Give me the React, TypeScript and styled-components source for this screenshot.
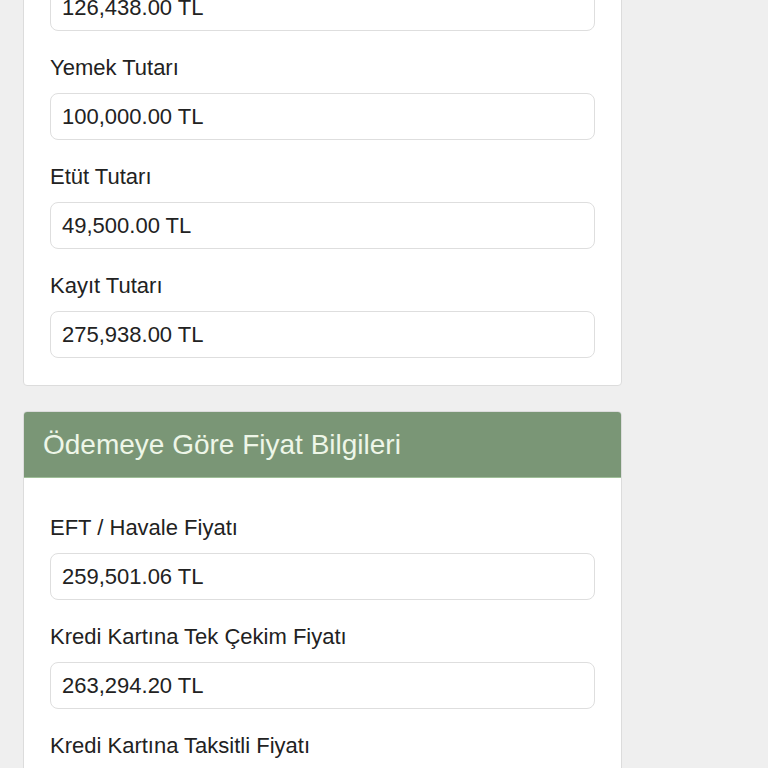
import * as React from 'react'
import styled, {createGlobalStyle} from 'styled-components'

const GlobalStyle = createGlobalStyle`
  html, body {
    margin: 0;
    padding: 0;
    background: #efefef;
  }
  body {
    font-family: "Liberation Sans", Arial, "Noto Sans", sans-serif;
    color: #222;
  }
`

// the page is shown scrolled down, so the first card starts above the window
const Page = styled.main`
  margin-top: -158px;
  padding: 0 0 40px 23px;
  display: flex;
  flex-direction: column;
  gap: 25px;
`

const Card = styled.section`
  width: 599px;
  box-sizing: border-box;
  background: #fff;
  border: 1px solid #dcdcdc;
  border-radius: 4px;
  overflow: hidden;
`

const CardHeader = styled.header`
  height: 66px;
  display: flex;
  align-items: center;
  padding: 0 19px;
  background: #7a9676;
  border-bottom: 1px solid #9fbf98;
  box-sizing: border-box;
  color: #eef6e8;
  font-size: 28px;
`

const CardBody = styled.div`
  padding: 37px 26px 27px;
  display: flex;
  flex-direction: column;
  gap: 24px;
`

const Field = styled.label`
  display: flex;
  flex-direction: column;
  gap: 12px;
`

const FieldLabel = styled.span`
  font-size: 22px;
  line-height: 26px;
  color: #222;
`

const PriceInput = styled.input`
  height: 47px;
  width: 100%;
  box-sizing: border-box;
  padding: 0 11px;
  border: 1px solid #dedede;
  border-radius: 8px;
  background: #fff;
  font-family: inherit;
  font-size: 22px;
  color: #222;
  outline: none;
`

type TField = {label: string, value: string}

const productFields: TField[] = [
  {label: 'Eğitim Tutarı', value: '126,438.00 TL'},
  {label: 'Yemek Tutarı', value: '100,000.00 TL'},
  {label: 'Etüt Tutarı', value: '49,500.00 TL'},
  {label: 'Kayıt Tutarı', value: '275,938.00 TL'},
]

const paymentFields: TField[] = [
  {label: 'EFT / Havale Fiyatı', value: '259,501.06 TL'},
  {label: 'Kredi Kartına Tek Çekim Fiyatı', value: '263,294.20 TL'},
  {label: 'Kredi Kartına Taksitli Fiyatı', value: '269,120.45 TL'},
]

const PriceCard: React.FC<{title: string, fields: TField[]}> = ({title, fields}) => (
  <Card>
    <CardHeader>{title}</CardHeader>
    <CardBody>
      {fields.map(f => (
        <Field key={f.label}>
          <FieldLabel>{f.label}</FieldLabel>
          <PriceInput readOnly value={f.value}/>
        </Field>
      ))}
    </CardBody>
  </Card>
)

const App: React.FC = () => (
  <>
    <GlobalStyle/>
    <Page>
      <PriceCard title="Ürün Fiyat Bilgileri" fields={productFields}/>
      <PriceCard title="Ödemeye Göre Fiyat Bilgileri" fields={paymentFields}/>
    </Page>
  </>
)

export default App
